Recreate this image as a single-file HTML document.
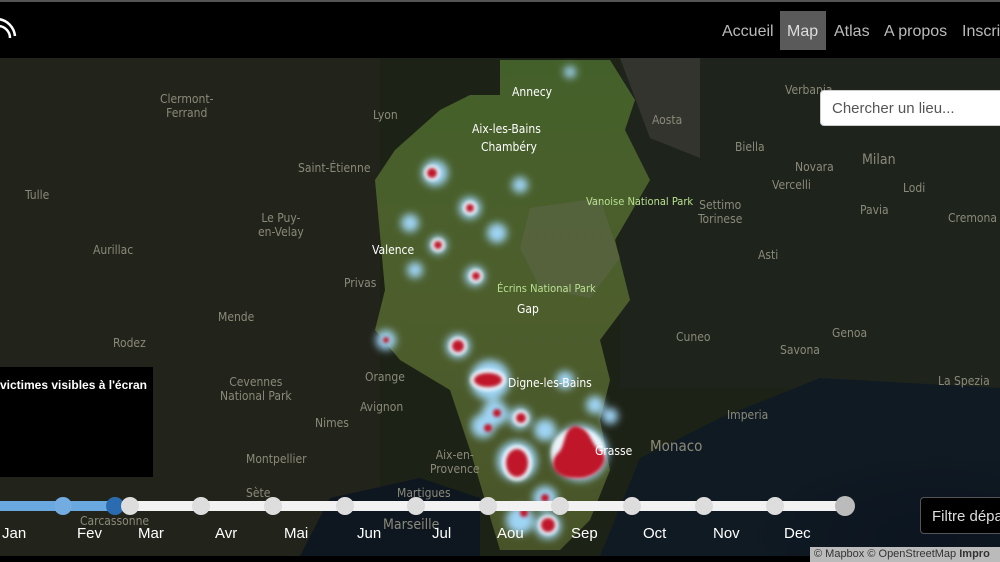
<!DOCTYPE html>
<html><head><meta charset="utf-8"><style>
*{margin:0;padding:0;box-sizing:border-box}
body{width:1000px;height:562px;overflow:hidden;background:#000;font-family:"Liberation Sans",sans-serif;position:relative}
.nav{position:absolute;left:0;top:0;width:1000px;height:58px;background:#000;border-top:2px solid #555}
.nav a{position:absolute;top:21px;color:#bbb;font-size:16px;text-decoration:none}
.map{position:absolute;left:0;top:58px;width:1000px;height:498px;overflow:hidden}
.lbl{position:absolute;color:#8a8a7a;font-size:12px;text-align:center;line-height:14px;font-family:"DejaVu Sans Condensed","DejaVu Sans",sans-serif;font-stretch:condensed}
.lw{color:#fff}
.tl{position:absolute;color:#fff;font-size:15px;top:525px}
.dot{position:absolute;top:497px;width:18px;height:18px;border-radius:50%;background:#ddd}
</style></head><body>
<div class="map">
<svg width="1000" height="498" style="position:absolute;left:0;top:0">
<defs>
<radialGradient id="sea" cx="0.85" cy="0.9" r="0.5"><stop offset="0" stop-color="#0b1420"/><stop offset="1" stop-color="#101a22"/></radialGradient>
<linearGradient id="alp" x1="0" y1="0" x2="0" y2="1"><stop offset="0" stop-color="#44602a"/><stop offset="0.5" stop-color="#4d5e2c"/><stop offset="1" stop-color="#485428"/></linearGradient>
<filter id="b"><feGaussianBlur stdDeviation="4"/></filter>
<filter id="b2"><feGaussianBlur stdDeviation="1.5"/></filter>
</defs>
<rect width="1000" height="498" fill="#1d2216"/>
<rect x="0" y="0" width="380" height="498" fill="#22231a"/>
<rect x="620" y="0" width="380" height="330" fill="#1e231b"/>
<path d="M600 498 L640 400 L720 360 L820 320 L1000 330 L1000 498Z" fill="url(#sea)"/>
<path d="M300 498 L330 440 L420 420 L480 440 L480 498Z" fill="#0e1620"/>
<path d="M620 0 L700 0 L700 100 L650 80Z" fill="#34342f"/>
<path d="M500 2 L610 2 L635 42 L625 72 L650 122 L615 182 L630 242 L600 282 L610 322 L600 362 L610 412 L590 462 L560 492 L500 492 L470 392 L450 332 L400 302 L375 272 L385 232 L375 122 L395 92 L440 52 L470 37 L500 37Z" fill="url(#alp)"/>
<path d="M530 150 L600 140 L620 200 L590 240 L540 230 L520 190Z" fill="#5e6648" opacity=".6"/>
<g filter="url(#b)" fill="#9fd4f5">
<circle cx="435" cy="115" r="13"/><circle cx="470" cy="150" r="11"/><circle cx="410" cy="165" r="9"/><circle cx="497" cy="175" r="10"/><circle cx="438" cy="187" r="9"/><circle cx="520" cy="127" r="8"/><circle cx="475" cy="218" r="10"/><circle cx="386" cy="282" r="10"/><circle cx="458" cy="288" r="12"/><circle cx="490" cy="322" r="20"/><circle cx="565" cy="322" r="9"/><circle cx="595" cy="347" r="9"/><circle cx="610" cy="358" r="8"/><circle cx="495" cy="355" r="13"/><circle cx="483" cy="368" r="12"/><circle cx="520" cy="360" r="11"/><circle cx="545" cy="372" r="11"/><circle cx="517" cy="403" r="20"/><circle cx="580" cy="395" r="28"/><circle cx="545" cy="440" r="12"/><circle cx="520" cy="462" r="14"/><circle cx="548" cy="468" r="13"/><circle cx="415" cy="212" r="8"/><circle cx="570" cy="14" r="6"/>
</g>
<g filter="url(#b2)" fill="#fff" opacity=".8">
<circle cx="432" cy="115" r="8"/><circle cx="470" cy="150" r="7"/><circle cx="438" cy="187" r="7"/><circle cx="476" cy="218" r="7"/><circle cx="458" cy="288" r="9"/><ellipse cx="488" cy="322" rx="18" ry="11"/><circle cx="521" cy="360" r="8"/><ellipse cx="517" cy="405" rx="15" ry="18"/><ellipse cx="578" cy="395" rx="27" ry="25"/><circle cx="548" cy="467" r="10"/>
</g>
<g filter="url(#b2)" fill="#c0192a">
<circle cx="432" cy="115" r="5"/><circle cx="470" cy="150" r="4"/><circle cx="438" cy="187" r="4"/><circle cx="476" cy="218" r="4"/><circle cx="386" cy="282" r="3"/><circle cx="458" cy="288" r="6"/><ellipse cx="488" cy="322" rx="14" ry="7"/><circle cx="497" cy="355" r="4"/><circle cx="488" cy="370" r="4"/><circle cx="521" cy="360" r="5"/><ellipse cx="517" cy="405" rx="11" ry="14"/><path d="M575 368 C592 370 590 388 602 394 C611 402 597 422 575 420 C553 420 548 405 558 395 C566 388 563 370 575 368Z"/><circle cx="548" cy="467" r="7"/><circle cx="524" cy="455" r="4"/><circle cx="545" cy="440" r="4"/>
</g>
</svg>
<div class="lbl" style="left:160px;top:34px">Clermont-<br>Ferrand</div>
<div class="lbl" style="left:373px;top:50px">Lyon</div>
<div class="lbl lw" style="left:512px;top:27px">Annecy</div>
<div class="lbl lw" style="left:472px;top:64px">Aix-les-Bains</div>
<div class="lbl lw" style="left:481px;top:82px">Chambéry</div>
<div class="lbl" style="left:298px;top:103px">Saint-Étienne</div>
<div class="lbl" style="left:25px;top:130px">Tulle</div>
<div class="lbl" style="left:258px;top:153px">Le Puy-<br>en-Velay</div>
<div class="lbl" style="left:93px;top:185px">Aurillac</div>
<div class="lbl lw" style="left:372px;top:185px">Valence</div>
<div class="lbl" style="left:344px;top:218px">Privas</div>
<div class="lbl" style="left:218px;top:252px">Mende</div>
<div class="lbl" style="left:113px;top:278px">Rodez</div>
<div class="lbl" style="left:365px;top:312px">Orange</div>
<div class="lbl" style="left:220px;top:317px">Cevennes<br>National Park</div>
<div class="lbl" style="left:360px;top:342px">Avignon</div>
<div class="lbl" style="left:315px;top:358px">Nimes</div>
<div class="lbl" style="left:246px;top:394px">Montpellier</div>
<div class="lbl" style="left:430px;top:390px">Aix-en-<br>Provence</div>
<div class="lbl" style="left:397px;top:428px">Martigues</div>
<div class="lbl" style="left:246px;top:428px">Sète</div>
<div class="lbl" style="left:383px;top:460px;font-size:14px">Marseille</div>
<div class="lbl" style="left:80px;top:456px">Carcassonne</div>
<div class="lbl" style="left:652px;top:55px">Aosta</div>
<div class="lbl" style="left:735px;top:82px">Biella</div>
<div class="lbl" style="left:795px;top:102px">Novara</div>
<div class="lbl" style="left:862px;top:95px;font-size:14px">Milan</div>
<div class="lbl" style="left:772px;top:120px">Vercelli</div>
<div class="lbl" style="left:903px;top:123px">Lodi</div>
<div class="lbl" style="left:860px;top:145px">Pavia</div>
<div class="lbl" style="left:948px;top:153px">Cremona</div>
<div class="lbl" style="left:698px;top:140px">Settimo<br>Torinese</div>
<div class="lbl" style="left:785px;top:25px">Verbania</div>
<div class="lbl" style="left:758px;top:190px">Asti</div>
<div class="lbl" style="left:676px;top:272px">Cuneo</div>
<div class="lbl" style="left:780px;top:285px">Savona</div>
<div class="lbl" style="left:832px;top:268px">Genoa</div>
<div class="lbl" style="left:938px;top:316px">La Spezia</div>
<div class="lbl" style="left:727px;top:350px">Imperia</div>
<div class="lbl" style="left:650px;top:381px;font-size:15px">Monaco</div>
<div class="lbl" style="left:586px;top:137px;color:#b8e090;font-size:11px">Vanoise National Park</div>
<div class="lbl" style="left:497px;top:224px;color:#b8e090;font-size:11px">Écrins National Park</div>
<div class="lbl lw" style="left:517px;top:244px">Gap</div>
<div class="lbl lw" style="left:508px;top:318px">Digne-les-Bains</div>
<div class="lbl lw" style="left:595px;top:386px">Grasse</div>
</div>
<div class="nav">
<svg width="20" height="40" style="position:absolute;left:0;top:12px"><g fill="none" stroke="#fff" stroke-width="2.5"><path d="M-2 12 A12 12 0 0 1 10 24"/><path d="M-2 5 A19 19 0 0 1 15 22"/></g></svg>
<a style="left:722px">Accueil</a>
<div style="position:absolute;left:780px;top:9px;width:46px;height:39px;background:#5a5a5a"></div>
<a style="left:787px;color:#ddd">Map</a>
<a style="left:834px">Atlas</a>
<a style="left:884px">A propos</a>
<a style="left:962px">Inscri</a>
</div>
<div style="position:absolute;left:820px;top:90px;width:190px;height:36px;background:#fff;border-radius:4px;border:1px solid #ccc;color:#555;font-size:15px;padding:9px 11px">Chercher un lieu...</div>
<div style="position:absolute;left:0;top:367px;width:153px;height:110px;background:#000;color:#fff;font-size:12px;font-weight:bold;padding:11px 0 0 0">victimes visibles à l'écran</div>
<div style="position:absolute;left:0;top:501px;width:845px;height:10px;background:#f2f2f2;border-radius:5px"></div>
<div style="position:absolute;left:0;top:501px;width:115px;height:10px;background:#6aa8e0"></div>
<div class="dot" style="left:54px;background:#72ace0"></div>
<div class="dot" style="left:106px;background:#2b6cb0"></div>
<div class="dot" style="left:121px"></div><div class="dot" style="left:192px"></div><div class="dot" style="left:264px"></div><div class="dot" style="left:336px"></div><div class="dot" style="left:407px"></div><div class="dot" style="left:479px"></div><div class="dot" style="left:551px"></div><div class="dot" style="left:623px"></div><div class="dot" style="left:695px"></div><div class="dot" style="left:766px"></div>
<div class="dot" style="left:835px;width:20px;height:20px;top:496px;background:#bbb"></div>
<div class="tl" style="left:2px">Jan</div><div class="tl" style="left:77px">Fev</div><div class="tl" style="left:138px">Mar</div><div class="tl" style="left:215px">Avr</div><div class="tl" style="left:284px">Mai</div><div class="tl" style="left:357px">Jun</div><div class="tl" style="left:432px">Jul</div><div class="tl" style="left:497px">Aou</div><div class="tl" style="left:571px">Sep</div><div class="tl" style="left:643px">Oct</div><div class="tl" style="left:713px">Nov</div><div class="tl" style="left:784px">Dec</div>
<div style="position:absolute;left:920px;top:497px;width:90px;height:37px;background:#000;border:1px solid #555;border-radius:4px;color:#ddd;font-size:15px;padding:10px 11px;white-space:nowrap;overflow:hidden">Filtre dépa</div>
<div style="position:absolute;left:810px;top:547px;width:190px;height:15px;background:#bbb;color:#333;font-size:11px;padding:1px 4px;white-space:nowrap;overflow:hidden">© Mapbox © OpenStreetMap <b>Impro</b></div>
</body></html>
